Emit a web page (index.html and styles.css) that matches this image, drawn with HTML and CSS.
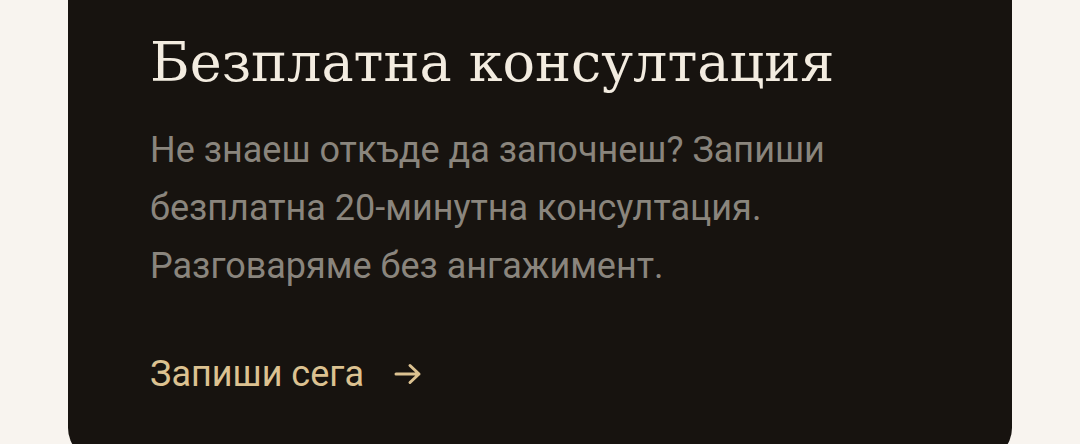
FILE: index.html
```html
<!DOCTYPE html>
<html lang="bg">
<head>
<meta charset="utf-8">
<link rel="stylesheet" href="styles.css">
</head>
<body>
<main class="page">
  <section class="card">
    <h2 class="card-title">Безплатна консултация</h2>
    <p class="card-text">Не знаеш откъде да започнеш? Запиши безплатна 20-минутна консултация. Разговаряме без ангажимент.</p>
    <a class="card-link" href="#">Запиши сега
      <svg class="arrow" width="28" height="22" viewBox="0 0 28 22" aria-hidden="true"><path d="M2 11H25M16 2.5L25 11L16 19.5" fill="none" stroke="currentColor" stroke-width="3" stroke-linecap="round" stroke-linejoin="round"/></svg>
    </a>
  </section>
</main>
</body>
</html>
```
FILE: styles.css
```css
html, body {
  margin: 0;
  padding: 0;
  background: #f8f4ef;
  height: 444px;
  overflow: hidden;
}
.page {
  padding: 0 68px;
}
.card {
  margin-top: -40px;
  background: #17130f;
  border-radius: 32px;
  padding: 73px 82px 68px;
  height: 359px;
}
.card-title {
  margin: 0;
  font-family: "DejaVu Serif", "Liberation Serif", serif;
  font-weight: 400;
  font-size: 54px;
  line-height: 60px;
  color: #f3ece0;
}
.card-text {
  margin: 28px 0 0;
  max-width: 700px;
  font-family: Roboto, "Liberation Sans", sans-serif;
  font-size: 36px;
  line-height: 58px;
  color: #8a857d;
}
.card-link {
  display: inline-flex;
  align-items: center;
  gap: 30px;
  margin-top: 61px;
  font-family: Roboto, "Liberation Sans", sans-serif;
  font-size: 36px;
  line-height: 36px;
  color: #dcc291;
  text-decoration: none;
}
.arrow {
  display: block;
}
```
